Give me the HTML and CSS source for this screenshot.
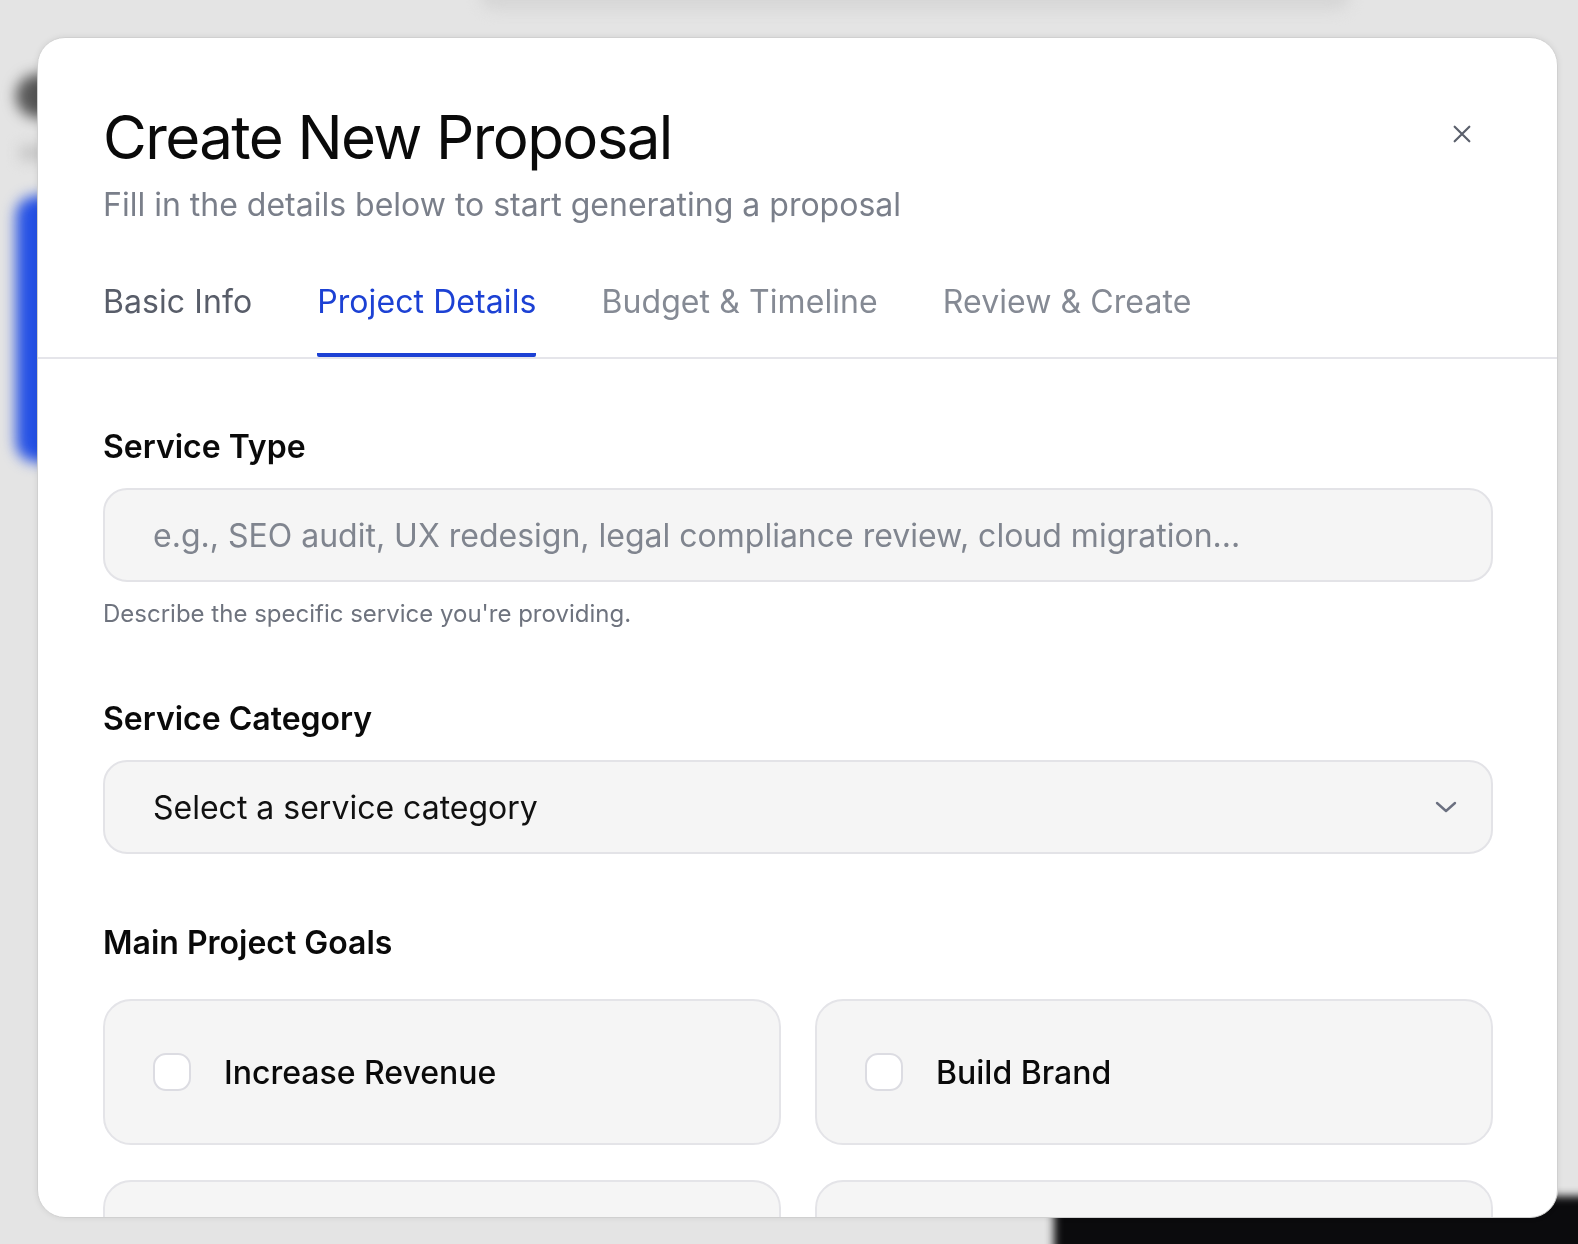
FILE: index.html
```html
<!DOCTYPE html>
<html lang="en">
<head>
    <meta charset="UTF-8">
    <meta name="viewport" content="width=device-width, initial-scale=1.0">
    <title>Create New Proposal</title>
    <link rel="stylesheet" href="styles.css">
</head>
<body>
    <!-- Blurred app behind the dialog -->
    <div class="backdrop">
        <div class="blur top-bar"></div>
        <div class="blur avatar"></div>
        <div class="blur side-text"></div>
        <div class="blur side-button"></div>
        <div class="blur footer-dark"></div>
    </div>

    <div class="modal">
        <!-- Dialog heading -->
        <header class="modal-header">
            <div>
                <h1>Create New Proposal</h1>
                <p class="subtitle">Fill in the details below to start generating a proposal</p>
            </div>
            <button class="close-btn" aria-label="Close">
                <svg width="22" height="22" viewBox="0 0 24 24" fill="none" stroke="currentColor" stroke-width="2.4" stroke-linecap="round">
                    <path d="M4 4L20 20M20 4L4 20"/>
                </svg>
            </button>
        </header>

        <!-- Step tabs -->
        <nav class="tabs">
            <a class="tab done">Basic Info</a>
            <a class="tab active">Project Details</a>
            <a class="tab">Budget &amp; Timeline</a>
            <a class="tab">Review &amp; Create</a>
        </nav>

        <div class="modal-body">
            <div class="field">
                <label class="field-label">Service Type</label>
                <input type="text" class="text-input" placeholder="e.g., SEO audit, UX redesign, legal compliance review, cloud migration...">
                <p class="hint">Describe the specific service you're providing.</p>
            </div>

            <div class="field">
                <label class="field-label">Service Category</label>
                <div class="select">
                    <span>Select a service category</span>
                    <svg width="22" height="12" viewBox="0 0 22 12" fill="none" stroke="currentColor" stroke-width="2.4" stroke-linecap="round" stroke-linejoin="round">
                        <path d="M2 2L11 10L20 2"/>
                    </svg>
                </div>
            </div>

            <div class="field">
                <label class="field-label goals-label">Main Project Goals</label>
                <div class="goal-grid">
                    <label class="goal-card"><span class="check"></span>Increase Revenue</label>
                    <label class="goal-card"><span class="check"></span>Build Brand</label>
                    <label class="goal-card"><span class="check"></span>Improve Efficiency</label>
                    <label class="goal-card"><span class="check"></span>Reduce Costs</label>
                </div>
            </div>
        </div>
    </div>
</body>
</html>
```

FILE: styles.css
```css
/* Page and blurred background */
body {
    margin: 0;
    height: 1244px;
    overflow: hidden;
    background-color: #e4e4e4;
    font-family: Inter, "Noto Sans", sans-serif;
    color: #0a0a0a;
}
.backdrop {
    position: fixed;
    inset: 0;
}
.blur {
    position: absolute;
    filter: blur(7px);
}
.top-bar {
    left: 480px;
    top: -20px;
    width: 870px;
    height: 30px;
    border-radius: 15px;
    background-color: #d6d6d6;
}
.avatar {
    left: 16px;
    top: 74px;
    width: 44px;
    height: 44px;
    border-radius: 50%;
    background-color: #555;
}
.side-text {
    left: 20px;
    top: 146px;
    width: 40px;
    height: 14px;
    background-color: #c4c4c4;
}
.side-button {
    left: 16px;
    top: 196px;
    width: 60px;
    height: 266px;
    border-radius: 20px;
    background-color: #2450e4;
}
.footer-dark {
    left: 1054px;
    top: 1196px;
    width: 560px;
    height: 80px;
    background-color: #0b0b0d;
    filter: blur(4px);
}

/* Dialog */
.modal {
    position: relative;
    z-index: 1;
    margin: 37px 0 0 37px;
    width: 1519px;
    height: 1179px;
    overflow: hidden;
    background-color: #fff;
    border: 1px solid #d0d0d0;
    border-radius: 28px;
    box-shadow: 0 0 6px rgba(0,0,0,0.08);
}
.modal-header {
    display: flex;
    justify-content: space-between;
    align-items: flex-start;
    padding: 63px 75px 0 65px;
}
h1 {
    margin: 0;
    font-size: 60px;
    font-weight: 400;
    line-height: 72px;
    letter-spacing: -1.6px;
}
.subtitle {
    margin: 12px 0 0;
    font-size: 32px;
    line-height: 40px;
    color: #7a7f8a;
}
.close-btn {
    margin-top: 13px;
    width: 40px;
    height: 40px;
    display: flex;
    align-items: center;
    justify-content: center;
    padding: 0;
    border: none;
    background: none;
    color: #5b606c;
    cursor: pointer;
}

/* Tabs */
.tabs {
    display: flex;
    gap: 65px;
    margin-top: 57px;
    padding: 0 65px;
    border-bottom: 2px solid #e5e5ea;
}
.tab {
    padding-bottom: 31px;
    border-bottom: 4px solid transparent;
    font-size: 32px;
    line-height: 40px;
    letter-spacing: 0.08px;
    color: #858a94;
}
.tab.done {
    color: #585d69;
}
.tab.active {
    color: #1c41d4;
    border-bottom-color: #1c41d4;
    border-radius: 2px;
}

/* Form body */
.modal-body {
    padding: 68px 64px 0 65px;
}
.field {
    margin-bottom: 69px;
}
.field-label {
    display: block;
    margin-bottom: 21px;
    font-size: 32px;
    font-weight: 600;
    line-height: 40px;
}
.goals-label {
    margin-bottom: 36px;
}
.text-input,
.select {
    box-sizing: border-box;
    width: 100%;
    height: 94px;
    padding: 0 34px 0 48px;
    background-color: #f5f5f5;
    border: 2px solid #e3e3e7;
    border-radius: 24px;
    font-family: inherit;
    font-size: 32px;
    color: #111;
}
.text-input::placeholder {
    color: #80858f;
}
.hint {
    margin: 16px 0 0;
    font-size: 24px;
    line-height: 32px;
    color: #6e737e;
}
.select {
    display: flex;
    align-items: center;
    justify-content: space-between;
}
.select svg {
    color: #6b7080;
}

/* Goal checkbox cards */
.goal-grid {
    display: grid;
    grid-template-columns: 1fr 1fr;
    gap: 35px 34px;
}
.goal-card {
    box-sizing: border-box;
    height: 146px;
    display: flex;
    align-items: center;
    gap: 33px;
    padding: 0 48px;
    background-color: #f5f5f5;
    border: 2px solid #e4e4e8;
    border-radius: 28px;
    font-size: 32px;
    font-weight: 500;
}
.check {
    box-sizing: border-box;
    width: 38px;
    height: 38px;
    background-color: #fff;
    border: 2px solid #dcdce2;
    border-radius: 13px;
}
```
